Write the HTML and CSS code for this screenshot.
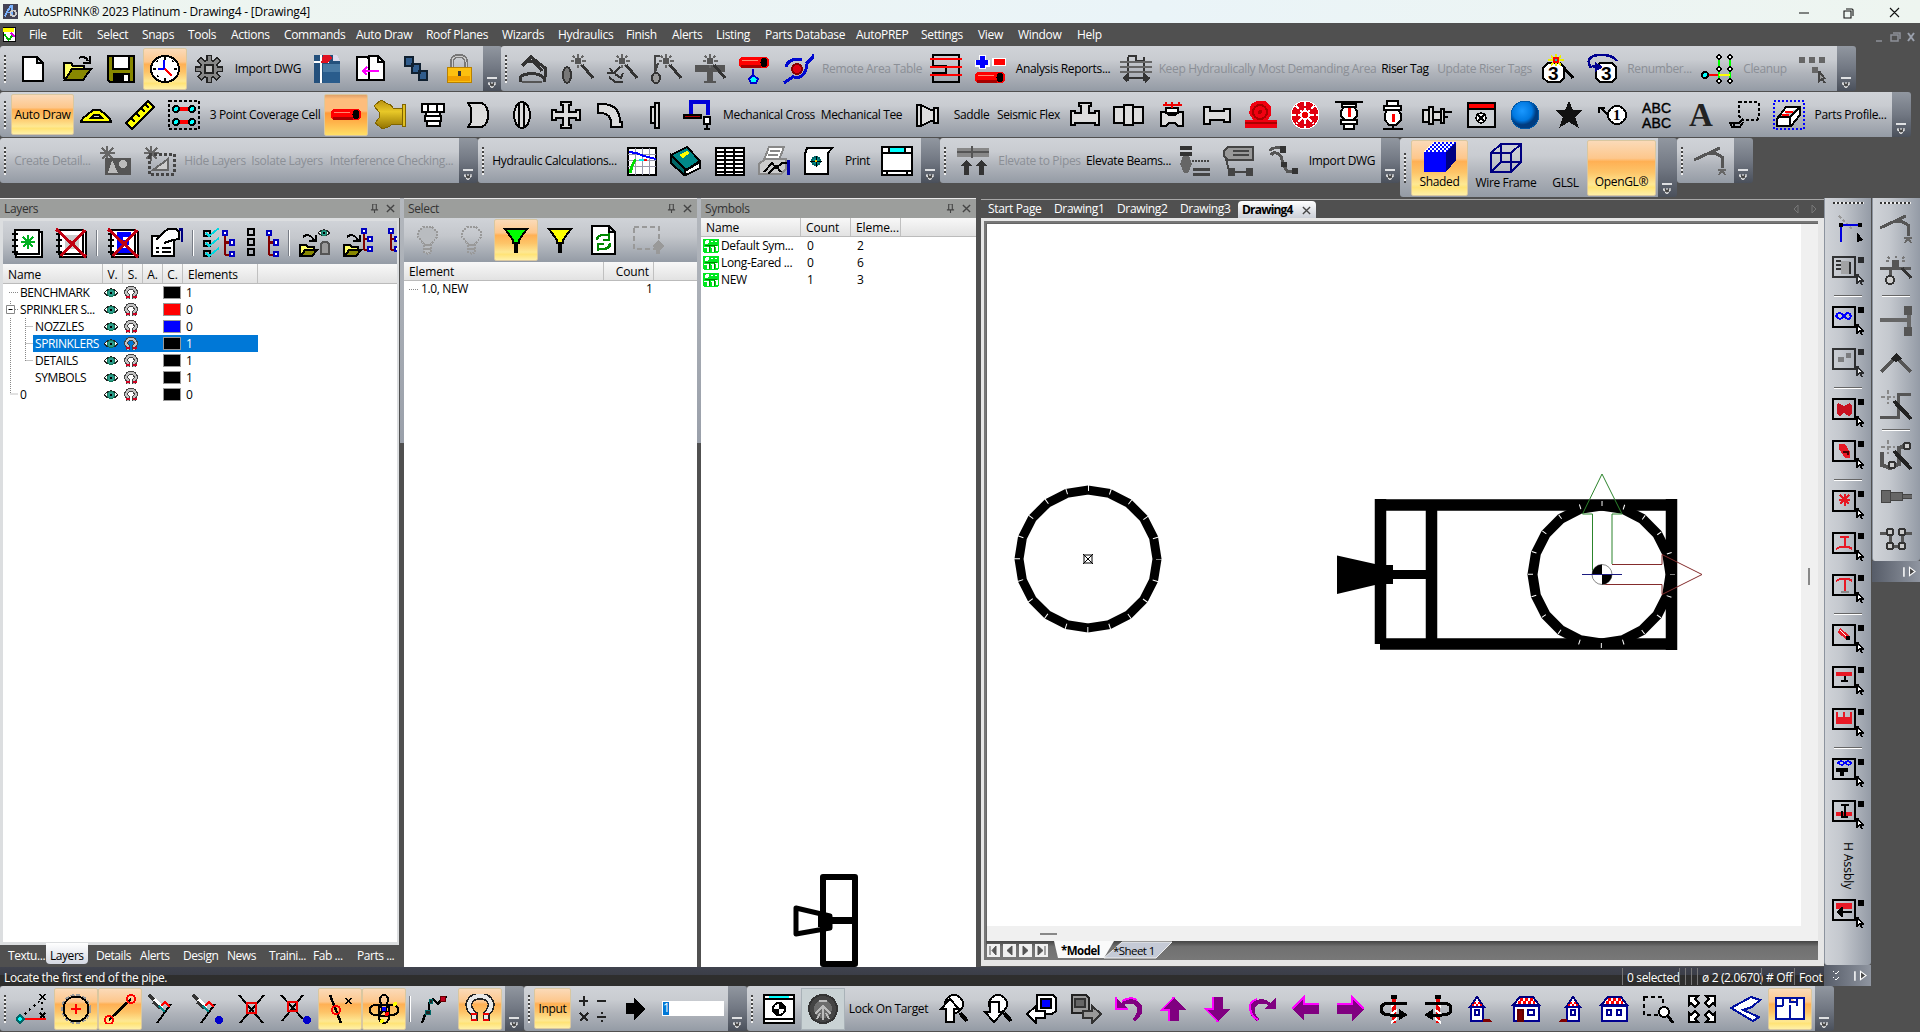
FILE: index.html
```html
<!DOCTYPE html>
<html lang="en">
<head>
<meta charset="utf-8">
<title>AutoSPRINK® 2023 Platinum - Drawing4 - [Drawing4]</title>
<link rel="stylesheet" href="styles.css">
</head>
<body>
<svg class="defs" width="0" height="0">
<defs>
<pattern id="chk" width="4" height="4" patternUnits="userSpaceOnUse"><path d="M0 0h2v2H0zM2 2h2v2H2z" fill="#fff" stroke="none"/></pattern>
<linearGradient id="gold" x2="0" y2="1"><stop offset="0" stop-color="#b89010"/><stop offset=".4" stop-color="#e8c828"/><stop offset="1" stop-color="#907000"/></linearGradient>
<radialGradient id="ball" cx=".4" cy=".35"><stop offset="0" stop-color="#1a98ff"/><stop offset=".7" stop-color="#0078e0"/><stop offset="1" stop-color="#003c80"/></radialGradient>
</defs>
<symbol id="new" viewBox="0 0 32 30"><path d="M6 3h14l6 6v18H6zM20 3v6h6"/></symbol>
<symbol id="open" viewBox="0 0 32 30"><path d="M3 25V9h7l2 3h11v4" fill="#ff6"/><path d="M4 26l7-11h19l-8 11z" fill="#880"/><path d="M18 4q6-3 9 3M29 2v7h-7" fill="none"/></symbol>
<symbol id="save" viewBox="0 0 32 30"><path d="M3 2h26v26H5l-2-2z" fill="#880"/><path d="M8 2h16v13H8z"/><path d="M9 20h15v8H9z" fill="#000"/><path d="M20 22h2v4h-2z" stroke="#fff"/></symbol>
<symbol id="clock" viewBox="0 0 32 30"><ellipse cx="16" cy="15" rx="14" ry="13"/><path d="M16 3v3M16 24v3M4 15h3M25 15h3M8 7l1 1M24 7l-1 1M8 23l1-1"/><path d="M15 6v9H9" stroke="#00f" fill="none"/><path d="M16 15l7 7" stroke="red"/></symbol>
<symbol id="gear" viewBox="0 0 32 30"><path d="M16 1v28M2 15h28M6 5l20 20M26 5L6 25" stroke="#222" stroke-width="6"/><circle cx="16" cy="15" r="9" fill="#888" stroke="#222"/><path d="M16 2v6M16 22v6M3 15h6M23 15h6M7 6l4 4M25 6l-4 4M7 24l4-4M25 24l-4-4" stroke="#888" stroke-width="3"/><path d="M12 11h8v8h-8z" fill="#bbb" stroke="#222"/></symbol>
<symbol id="bmp" viewBox="0 0 32 30"><g stroke="none"><path d="M3 1h22l4 6v22H3z" fill="#24507c"/><path d="M12 10h17v19H12z" fill="#4a7aa4"/><path d="M12 18h17v11H12z" fill="#2a5c8c"/><path d="M22 1h4l3 6h-7z" fill="#dde"/><path d="M3 7h15v2H3zM9 1h2v28H9z" fill="#fff"/><path d="M12 1h7l2 3-5 5h-6z" fill="#e01020"/></g></symbol>
<symbol id="pages" viewBox="0 0 32 30"><path d="M2 3h10l5 5v18H2z"/><path d="M14 2h9l6 6v18H14z"/><path d="M23 2v6h6" fill="none"/><path d="M24 17H8m4-4l-4 4 4 4" stroke="#f0f" fill="none"/></symbol>
<symbol id="cubes" viewBox="0 0 32 30"><g fill="#305c8c" stroke="#102030" stroke-width="1.500"><path d="M6 3h8v9H6zM13 10h8v9h-8zM20 17h8v9h-8z"/></g></symbol>
<symbol id="lock" viewBox="0 0 32 30"><path d="M9 14V8q0-6 7-6t7 6v6" fill="none" stroke="#777" stroke-width="4"/><path d="M9 14V8q0-6 7-6t7 6v6" fill="none" stroke="#ccc" stroke-width="1"/><path d="M4 13h24v15H4z" fill="#fcc010" stroke="#b88000" stroke-width="1"/><path d="M5 22h22v5H5z" fill="#f0a000" stroke="none"/><path d="M15 17h3v5h-3z" fill="#333" stroke="none"/></symbol>
<symbol id="crane" viewBox="0 0 32 30"><path d="M4 12l9-9 14 11v9M9 7l7 1 8 9" fill="none" stroke="#333" stroke-width="3"/><path d="M2 28v-5q5-4 12-3 7-1 12 4v4" fill="none" stroke="#333" stroke-width="3"/><path d="M4 28h20" stroke="#555" stroke-width="2"/></symbol>
<symbol id="spark" viewBox="0 0 32 30"><path d="M16 0v4M16 11v3M9 7h3M20 7h4M11 2l2 2M21 2l-2 2M21 13l-2-2" stroke="#666"/><path d="M13 4h6v6h-6z" fill="#555" stroke="none"/><path d="M20 11l11 13" stroke="#333" stroke-width="3"/></symbol>
<symbol id="wand1" viewBox="0 0 32 30"><use href="#spark"/><ellipse cx="5" cy="21" rx="4" ry="8" fill="#777" stroke="#333"/></symbol>
<symbol id="wand2" viewBox="0 0 32 30"><use href="#spark"/><path d="M4 14l3 5M1 19h7l6-6M3 23l6 5h8M9 20l6 4 2-5" fill="none" stroke="#333"/></symbol>
<symbol id="wand3" viewBox="0 0 32 30"><use href="#spark"/><path d="M4 2h6M5 3v16l3-10" fill="none" stroke="#444"/><ellipse cx="6" cy="24" rx="4" ry="5" fill="#999" stroke="#333"/></symbol>
<symbol id="wand4" viewBox="0 0 32 30"><path d="M1 11h30v7H19v9h3v2H10v-2h3v-9H1z" fill="#555" stroke="none"/><use href="#spark"/></symbol>
<symbol id="pipered" viewBox="0 0 32 30"><path d="M3 3h25l3 3v5l-3 3H3l-2-3V6z" fill="red" stroke="none"/><path d="M3 11h20v3H3z" fill="#a80000" stroke="none"/><path d="M4 6h16" stroke="#ff8a70" stroke-width="1"/><ellipse cx="26" cy="8.500" rx="3.500" ry="4.500" fill="#000" stroke="none"/></symbol>
<symbol id="drip" viewBox="0 0 32 30"><use href="#pipered"/><path d="M15 15v6l-4 4 2 4h5l2-4-5-4" fill="#0ff" stroke="#00c"/></symbol>
<symbol id="orbit" viewBox="0 0 32 30"><path d="M31 0v3l-7 7M24 10v5q-2 9-12 9M4 13Q7 3 20 6M12 22L2 29" fill="none" stroke="#0008d0" stroke-width="3"/><circle cx="15" cy="15" r="5" fill="#e00010" stroke="#800"/></symbol>
<symbol id="rat" viewBox="0 0 32 30"><path d="M3 1h26v27H3v-9h13v-7H3z" fill="none"/><path d="M0 5h32M0 13h32M0 21h32" stroke="red"/></symbol>
<symbol id="pm" viewBox="0 0 32 30"><path d="M1 9h15M8 1v14" stroke="#fff" stroke-width="7"/><path d="M2 8h12M8 2v12" stroke="#00f" stroke-width="5"/><path d="M18 4h14v8H18z" stroke="none"/><path d="M20 5h11v6H20z" fill="red" stroke="none"/><use href="#pipered" y="15"/></symbol>
<symbol id="grid" viewBox="0 0 32 30"><path d="M8 3v24M24 3v24M3 24h27M8 2h8v5h8" fill="none" stroke="#333" stroke-width="2.500"/><path d="M0 8h32M0 13h32M0 18h32" stroke="#666"/><path d="M7 20l-5 4 5 5zM25 20l5 4-5 5z" fill="#333" stroke="none"/></symbol>
<symbol id="nodes" viewBox="0 0 32 30"><path d="M18 3v25M29 3v25" stroke="#0f0"/><path d="M18 21h11" stroke="#ff0"/><path d="M4 21h13" stroke="red"/><circle cx="4" cy="21" r="3" fill="#0ff"/><g stroke-width="1.500"><circle cx="18" cy="3" r="2"/><circle cx="29" cy="3" r="2"/><circle cx="18" cy="15" r="2"/><circle cx="29" cy="15" r="2"/><circle cx="18" cy="27" r="2"/><circle cx="29" cy="27" r="2"/></g></symbol>
<symbol id="boxes" viewBox="0 0 32 30"><path d="M2 3h6v6H2zM12 3h6v6h-6zM22 3h6v6h-6zM15 13h6v6h-6z" fill="#666" stroke="none"/><path d="M22 17v10l3-2 3 4M22 17l6 8" fill="#999" stroke="#444"/></symbol>
<symbol id="prot" viewBox="0 0 32 30"><path d="M1 22q1-4 6-7l6-5h7l6 5q4 3 5 7z" fill="#ff0"/><path d="M11 18l3-3h5l3 3z" fill="#c8cbd0"/></symbol>
<symbol id="ruler" viewBox="0 0 32 30"><path d="M2 23L24 1l6 6L8 29z" fill="#ff0"/><path d="M8 19l3 3M13 14l3 3M18 9l3 3M22 5l3 3"/></symbol>
<symbol id="cell" viewBox="0 0 32 30"><path d="M1 1h30v28H1z" fill="none" stroke-dasharray="3 2"/><path d="M8 9h16M8 22h16" stroke="red" stroke-width="4"/><g fill="#0ff"><circle cx="8" cy="9" r="3"/><circle cx="24" cy="9" r="3"/><circle cx="8" cy="22" r="3"/><circle cx="24" cy="22" r="3"/></g></symbol>
<symbol id="goldt" viewBox="0 0 32 30"><path d="M0 6l7-6 7 4h2l3 4h12v16H18l-2 2-7 3-8-6 4-5v-6z" fill="url(#gold)" stroke="#806400" stroke-width="1"/><path d="M28 4h3v22h-3z" fill="#e0c020" stroke="#806400" stroke-width="1"/></symbol>
<symbol id="screw" viewBox="0 0 32 30"><path d="M4 4h22v8H4zM8 12h14v4H8zM7 16h16v5H7zM9 21h13v5H9zM10 5v6M19 5v6"/></symbol>
<symbol id="cap" viewBox="0 0 32 30"><path d="M6 3h14q6 3 6 12t-6 12H6l3-5V8z" fill="#ddd"/></symbol>
<symbol id="ring" viewBox="0 0 32 30"><ellipse cx="16" cy="15" rx="8" ry="13" fill="#ddd"/><path d="M13 4v22M18 3v24"/></symbol>
<symbol id="cross" viewBox="0 0 32 30"><path d="M11 2h10v3h-2v7h7v-2h4v10h-4v-2h-7v7h2v3H11v-3h2v-7H6v2H2V10h4v2h7V5h-2z" fill="#ddd"/></symbol>
<symbol id="elbow" viewBox="0 0 32 30"><path d="M4 4h4q18 0 18 18h2v5H17v-4q0-9-9-10H4z" fill="#ddd"/></symbol>
<symbol id="flange" viewBox="0 0 32 30"><path d="M17 3h4v25h-4zM13 7h4v16h-4z" fill="#ddd"/></symbol>
<symbol id="hose" viewBox="0 0 32 30"><path d="M9 14V2h17v13" fill="none" stroke="#0000d8" stroke-width="4"/><path d="M2 15h17v3H2z" fill="#a00"/><path d="M22 17h6v7h-6zM25 24v5m-3 0h6"/></symbol>
<symbol id="reduc" viewBox="0 0 32 30"><path d="M6 5h4l10 5h3v11h-3l-10 5H6zM23 8h4v15h-4zM10 5v21" fill="#ddd"/></symbol>
<symbol id="tee" viewBox="0 0 32 30"><path d="M10 3h12v3h-2v7h6v-2h4v14h-4v-2H6v2H2V11h4v2h6V6h-2z" fill="#ddd"/></symbol>
<symbol id="coupl" viewBox="0 0 32 30"><path d="M1 7h10v16H1zM11 5h9v20h-9zM20 7h10v16H20z" fill="#ddd"/></symbol>
<symbol id="valve" viewBox="0 0 32 30"><path d="M4 12h5l3 3h6l3-3h5v14h-5l-3-3h-6l-3 3H4z" fill="#ddd"/><path d="M9 8h12v5H9z" stroke-width="1.500"/><path d="M6 5h19M9 2v3M15 2v6M22 2v3" stroke="#e00"/></symbol>
<symbol id="nip" viewBox="0 0 32 30"><path d="M3 7h6v4h14v-2h6v13h-6v-2H9v4H3z" fill="#ddd"/></symbol>
<symbol id="pump" viewBox="0 0 32 30"><path d="M6 4l6-3h8l6 6v8l-3 5h9v8H0v-8h8L4 13z" fill="#f00010" stroke="none"/><circle cx="15" cy="12" r="7" fill="none" stroke="#a00"/><path d="M0 23h32" stroke="#a00"/><circle cx="15" cy="12" r="2" fill="#a00" stroke="none"/></symbol>
<symbol id="wheel" viewBox="0 0 32 30"><circle cx="16" cy="15" r="14" fill="#e00010" stroke="#fff" stroke-width="1"/><path d="M16 2v26M3 15h26M7 6l18 18M25 6L7 24" stroke="#fff" stroke-dasharray="4 2"/><circle cx="16" cy="15" r="4" fill="#e00" stroke="#fff"/></symbol>
<symbol id="head1" viewBox="0 0 32 30"><path d="M2 2h28" /><path d="M11 7l-3 4v5l4 4h8l4-4v-5l-3-4z"/><path d="M9 4h14v3H9zM8 20h16v4H8zM11 24h10v5H11z"/><path d="M16 8v9" stroke="red" stroke-width="3"/></symbol>
<symbol id="head2" viewBox="0 0 32 30"><path d="M10 1h11v5H10zM7 6h17v4H7zM10 10l-2 4v6l4 5h7l5-5v-6l-3-4zM6 29h20M16 25v4"/><path d="M16 14v8" stroke="red" stroke-width="3"/></symbol>
<symbol id="head3" viewBox="0 0 32 30"><path d="M2 10h6v12H2zM8 7h4v17H8zM12 12h8v8h-8zM20 9h3v14h-3zM23 12h8M23 17h4" fill="#ddd"/></symbol>
<symbol id="cab" viewBox="0 0 32 30"><path d="M3 3h27v24H3z" fill="#ccd0d4"/><path d="M4 4h25v4H4z" fill="red" stroke="none"/><path d="M4 9h25"/><circle cx="16" cy="18" r="5" stroke-width="1.500"/><path d="M12 14l8 8M20 14l-8 8" stroke-width="1.500"/></symbol>
<symbol id="sphere" viewBox="0 0 32 30"><circle cx="16" cy="15" r="14" fill="url(#ball)" stroke="#0058a8" stroke-width="1"/></symbol>
<symbol id="star" viewBox="0 0 32 30"><path d="M16 1l4 9h10l-8 7 4 11-10-6-10 6 4-11-8-7h10z" fill="#111" stroke="none"/></symbol>
<symbol id="cloud" viewBox="0 0 32 30"><path d="M10 2h18l2 2v13l-2 3H13l-3-4z" fill="none" stroke-dasharray="3 2"/><path d="M14 19l-4 4H1l2 4h8l3-5M5 23v5" fill="none"/></symbol>
<symbol id="part" viewBox="0 0 32 30"><path d="M1 1h30v28H1z" fill="none" stroke="#00f" stroke-dasharray="2 2"/><path d="M4 19l9-12h14v8l-9 11H4zM4 17h13l9-9M17 17v8"/><path d="M12 12h8M9 15h7" stroke="red"/></symbol>
<symbol id="det1" viewBox="0 0 32 30"><path d="M7 0v15M0 7h15M2 2l11 11M13 2L2 13" stroke="#666"/><path d="M5 12h26v17H5z" fill="#555" stroke="none"/><path d="M8 27l4-13 6 13z" fill="#bbb" stroke="none"/><circle cx="23" cy="18" r="4" fill="#bbb" stroke="none"/></symbol>
<symbol id="det2" viewBox="0 0 32 30"><path d="M7 0v15M0 7h15M2 2l11 11M13 2L2 13" stroke="#666"/><path d="M5 8h25v20H5z" fill="none" stroke="#444" stroke-width="3" stroke-dasharray="3 2"/><path d="M9 24l15-11v11z" fill="#ccc" stroke="#666"/></symbol>
<symbol id="chart" viewBox="0 0 32 30"><path d="M2 2h28v27H2z"/><path d="M2 8h28M2 14h28M2 20h28M9 2v27M16 2v27M23 2v27" stroke="#99a" stroke-width="1"/><path d="M3 6l7 1 8 3 12 3" stroke="#00f" fill="none"/><path d="M4 27q3-12 6-13" stroke="#0d0" stroke-width="3" fill="none"/><path d="M13 14h5" stroke="#0ee"/><path d="M18 14h3" stroke="red"/></symbol>
<symbol id="book" viewBox="0 0 32 30"><path d="M1 9L17 1l13 14-14 9z" fill="#088"/><path d="M1 9v8l13 12 2-5z" fill="#066"/><path d="M15 25l15-9v6l-14 7z"/><path d="M9 9l8-4 3 2-7 5z" fill="#ff0" stroke="none"/></symbol>
<symbol id="table" viewBox="0 0 32 30"><path d="M2 2h28v27H2z"/><path d="M2 6h28M2 10h28M2 14h28M2 18h28M2 22h28M2 26h28M11 2v27M20 2v27" stroke-width="1.600"/></symbol>
<symbol id="print" viewBox="0 0 32 30"><path d="M11 1h15l-5 13H6z" stroke="#888"/><path d="M12 5h10M10 9h10" stroke="#888"/><path d="M1 18l6-5h21v10l-5 5H1z" fill="#ccc" stroke="#888"/><path d="M6 26l8-9 4 5 6-5h5M10 28l8-8 5 6" fill="none"/><path d="M30 14v15" stroke="#00a" stroke-width="3"/></symbol>
<symbol id="scroll" viewBox="0 0 32 30"><path d="M5 2h25l-4 5v21H3V8z"/><circle cx="14" cy="15" r="4" fill="#088" stroke="#066"/><path d="M8 15h12M14 10v11" stroke-width="1"/><path d="M13 14h2v2h-2z" fill="#fc0" stroke="none"/></symbol>
<symbol id="sheet" viewBox="0 0 32 30"><path d="M1 1h30v28H1zM1 7h30M1 25h30M6 25v4M26 25v4M8 1v6M24 1v6"/><path d="M9 2h14v4H9z" fill="#0ff" stroke="none"/></symbol>
<symbol id="elev" viewBox="0 0 32 30"><path d="M0 2h32v9H0z" fill="#888" stroke="none"/><path d="M0 6h32M15 0v12" stroke="#555"/><path d="M9 14l-6 6h4v9h5v-9h4zM24 14l-6 6h4v9h5v-9h4z" fill="#333" stroke="none"/></symbol>
<symbol id="hang1" viewBox="0 0 32 30"><path d="M1 0h12v4H1zM1 6h12v4H1z" fill="#333" stroke="none"/><path d="M4 10h6l3 8-4 9H5L1 18z" fill="#666" stroke="none"/><path d="M13 15h18" stroke="#444" stroke-dasharray="2 1"/><path d="M14 23h17M14 28h17" stroke="#444" stroke-width="3"/></symbol>
<symbol id="hang2" viewBox="0 0 32 30"><path d="M5 1h25v13H5l-4-4V5z" fill="#999" stroke="#444"/><path d="M10 5h16M10 9h16M3 13l3 12" stroke="#444"/><path d="M7 26h20M6 23h5v6H6zM24 23h5v6h-5z" fill="#444" stroke="#444"/></symbol>
<symbol id="hang3" viewBox="0 0 32 30"><path d="M3 5q1-4 10-3M4 9q3-5 10 1l2 8 4 7h8" fill="none" stroke="#555" stroke-width="3"/><path d="M13 0h6v7h-6zM25 22h6v6h-6zM14 16h6v5h-6z" fill="#333" stroke="none"/></symbol>
<symbol id="shaded" viewBox="0 0 32 30"><path d="M0 10L9 0h23L22 10z" fill="#0008ff" stroke="none"/><path d="M0 10L9 0h23L22 10z" fill="url(#chk)" stroke="none"/><path d="M0 10h22v20H0z" fill="#00f" stroke="none"/><path d="M22 10L32 0v18L22 30z" fill="#000080" stroke="none"/></symbol>
<symbol id="wire" viewBox="0 0 32 30"><path d="M1 10h20v19H1zM11 1h20v18H11zM1 10l10-9M21 10L31 1M1 29l10-10M21 29l10-10" fill="none" stroke="#000080"/></symbol>
<symbol id="arm" viewBox="0 0 32 30"><path d="M0 14L26 2M13 7h8l7 4v11" fill="none" stroke="#555" stroke-width="3"/><path d="M24 24h8M25 29l3-5 3 5" fill="none" stroke="#666"/></symbol>
<symbol id="ovf" viewBox="0 0 11 12"><path d="M0 1h10" stroke="#fff" stroke-width="1.600"/><path d="M1 6h8l-4 5z" fill="#444" stroke="#fff" stroke-width="1.200" stroke-dasharray="2 1"/></symbol>
<symbol id="ovfv" viewBox="0 0 14 12"><path d="M1 1v10" stroke="#fff" stroke-width="1.600"/><path d="M7 1v9l6-4.500z" fill="#444" stroke="#fff" stroke-width="1.200"/></symbol>
<symbol id="nb" viewBox="0 0 32 30"><path d="M5 4h26v25H5z"/><path d="M4 2h24v24H4z"/><path d="M1 6h6M1 12h6M1 18h6M1 24h6"/></symbol>
<symbol id="nbnew" viewBox="0 0 32 30"><use href="#nb"/><path d="M17 7v14M10 14h14M12 9l10 10M22 9L12 19" stroke="#00b020"/></symbol>
<symbol id="redx" viewBox="0 0 32 30"><path d="M1 1l30 28M30 2L6 28" stroke="#c00010" stroke-width="3"/></symbol>
<symbol id="nbdel" viewBox="0 0 32 30"><use href="#nb"/><path d="M10 7h14v14H10z" fill="#ccc" stroke="none"/><use href="#redx"/></symbol>
<symbol id="nbdele" viewBox="0 0 32 30"><use href="#nb"/><path d="M10 4h14v5h-8v3h6v5h-6v3h8v5H10z" fill="#00f" stroke="none"/><use href="#redx"/></symbol>
<symbol id="prop" viewBox="0 0 32 30"><path d="M1 8h22v20H1zM5 20h3M5 24h3M11 20h9M11 24h9"/><path d="M5 12l8-8 4-3h8l3 3v7l-6 1-9 3"/><path d="M28 1h3v13" stroke="#000080" stroke-width="3" fill="none"/></symbol>
<symbol id="tree" viewBox="0 0 12 26"><path d="M3 4v20M3 12h6M3 24h6" fill="none" stroke="#800000"/><path d="M1 1h4v4H1zM8 10h4v4H8zM8 21h4v4H8z" stroke="#0000c0"/></symbol>
<symbol id="chktree" viewBox="0 0 32 30"><path d="M1 3h6v5H1zM1 13h6v5H1zM1 23h6v5H1z" fill="none"/><path d="M3 5l3 3L16 0M3 15l3 3 10-8M3 25l3 3 10-8" fill="none" stroke="#00d8e0"/><use href="#tree" x="18" y="2" width="14" height="27"/></symbol>
<symbol id="boxtree" viewBox="0 0 32 30"><path d="M1 1h6v6H1zM1 11h6v6H1zM1 21h6v6H1z" fill="none"/><use href="#tree" x="18" y="2" width="14" height="27"/></symbol>
<symbol id="eye" viewBox="0 0 16 12"><path d="M1 6q7-8 14 0-7 7-14 0z" stroke="#222" stroke-width="1.200"/><circle cx="8" cy="6" r="3.500" fill="#2a9a8a" stroke="#175" stroke-width="1"/><path d="M7 5h2v2H7z" fill="#000" stroke="none"/></symbol>
<symbol id="folder" viewBox="0 0 32 30"><path d="M1 28V17h6l2 2h6v3" fill="#ff6"/><path d="M2 28l4-6h12l-5 6z" fill="#880"/><path d="M4 9q6-5 11 3M17 7v6h-7" fill="none"/></symbol>
<symbol id="foldeye" viewBox="0 0 32 30"><use href="#folder"/><use href="#eye" x="18" y="0" width="14" height="10"/><path d="M22 26V16q4-5 8 0v10z" fill="#999" stroke="#555"/></symbol>
<symbol id="foldtree" viewBox="0 0 32 30"><use href="#folder"/><use href="#tree" x="17" y="0" width="13" height="24"/></symbol>
<symbol id="treeonly" viewBox="0 0 32 30"><use href="#tree" x="0" y="0" width="13" height="24"/></symbol>
<symbol id="mag" viewBox="0 0 14 14"><path d="M4 13V9Q2 8 2 6q1-4 5-4t5 4q0 2-2 3v4" fill="none" stroke="#444" stroke-width="4"/><path d="M4 13V9Q2 8 2 6q1-4 5-4t5 4q0 2-2 3v4" fill="none" stroke="#c4c4c4" stroke-width="2"/><path d="M2 11h4M9 11h4" stroke="#d00020"/></symbol>
<symbol id="bulb" viewBox="0 0 32 30"><path d="M11 2h9l5 5v5l-6 7v8l-3 2-4-2v-8L6 12V7z" fill="#b9bcc0" stroke="#999" stroke-dasharray="2 1"/><path d="M12 20h7M12 24h7" stroke="#999"/></symbol>
<symbol id="bulb2" viewBox="0 0 32 30"><path d="M11 2h9l5 5v5l-6 7v8l-3 2-4-2v-8L6 12V7z" fill="none" stroke="#999" stroke-dasharray="2 1"/><path d="M12 20h7M12 24h7" stroke="#999"/></symbol>
<symbol id="fung" viewBox="0 0 32 30"><path d="M5 4h22L19 15v3h-6v-3z" fill="#0f0"/><path d="M16 17v11" stroke-width="4"/></symbol>
<symbol id="funy" viewBox="0 0 32 30"><path d="M5 4h22L19 15v3h-6v-3z" fill="#ff0"/><path d="M16 17v11" stroke-width="4"/></symbol>
<symbol id="refresh" viewBox="0 0 32 30"><path d="M4 1h17l6 6v22H4zM21 1v6h6"/><path d="M9 15q0-5 7-5h4M21 8v7h-6M22 18q0 6-7 6h-4M10 26v-7h6" fill="none" stroke="#080" stroke-width="2.500"/></symbol>
<symbol id="selbox" viewBox="0 0 32 30"><path d="M2 2h25v22H2z" fill="none" stroke="#999" stroke-dasharray="5 3"/><path d="M27 15l5 6-4 4v4h-4v-4l-4-4z" fill="#999" stroke="none"/></symbol>
<symbol id="fr" viewBox="0 0 32 30"><path d="M1 1h22v20H1z" fill="none"/><path d="M26 1h6v6h-6z" fill="#000" stroke="none"/><path d="M25 18v9l3-2 2 4M25 18l6 7h-3" stroke-width="1.800"/></symbol>
<symbol id="s1" viewBox="0 0 32 30"><path d="M7 2l14 14" stroke="#999" stroke-dasharray="3 2"/><path d="M9 11v17M9 11h18" stroke="#0000e0"/><path d="M7 9h4v4H7zM26 9h4v4h-4zM25 18v10l6-2z" fill="#000" stroke="none"/></symbol>
<symbol id="v2" viewBox="0 0 32 30"><path d="M0 12h31M10 14v6" stroke="#555" stroke-width="3"/><circle cx="10" cy="24" r="4" fill="#ccc" stroke="#333"/><path d="M12 4h7v9h-7z" fill="#555" stroke="none"/><path d="M16 0v2M6 5h3M22 5h3M8 1l2 2M24 1l-2 2" stroke="#777"/><path d="M22 12l9 10" stroke="#333" stroke-width="3"/></symbol>
<symbol id="v3" viewBox="0 0 32 30"><path d="M0 14h28M29 8v14" stroke="#666" stroke-width="4"/><path d="M24 0h8v9h-8zM24 21h8v9h-8z" fill="#555" stroke="none"/></symbol>
<symbol id="v4" viewBox="0 0 32 30"><path d="M1 24L16 9l15 15" fill="none" stroke="#555" stroke-width="4"/><path d="M11 11l5-6 6 6-6 3z" fill="#222" stroke="none"/></symbol>
<symbol id="v5" viewBox="0 0 32 30"><path d="M0 27h18V4h13" fill="none" stroke="#555" stroke-width="3"/><path d="M8 0v14M1 7h14" stroke="#888" stroke-dasharray="4 2"/><path d="M14 11l17 18" stroke="#222" stroke-width="4"/></symbol>
<symbol id="v6" viewBox="0 0 32 30"><path d="M2 12v13l8 3 9-4V8l7-3" fill="none" stroke="#555" stroke-width="4"/><circle cx="27" cy="6" r="3.500" fill="#ccc" stroke="#333"/><circle cx="12" cy="25" r="3.500" fill="#ccc" stroke="#333"/><path d="M8 0v14M1 7h14" stroke="#888" stroke-dasharray="4 2"/><path d="M14 11l17 18" stroke="#222" stroke-width="4"/></symbol>
<symbol id="v7" viewBox="0 0 32 30"><path d="M1 8h9v12H1zM10 10h12v8H10zM22 12h10v4H22z" fill="#666" stroke="#444" stroke-width="1"/></symbol>
<symbol id="v8" viewBox="0 0 32 30"><path d="M0 9h10v13M32 9H22v13M7 22h18" fill="none" stroke="#555" stroke-width="3"/><g fill="#ccc" stroke="#333"><circle cx="10" cy="8" r="3.500"/><circle cx="22" cy="8" r="3.500"/><circle cx="10" cy="22" r="3.500"/><circle cx="22" cy="22" r="3.500"/></g></symbol>
<symbol id="b1" viewBox="0 0 32 30"><path d="M4 24L26 5M26 8v12" stroke-dasharray="2 4"/><path d="M24 0l5 6M29 0l-5 6M24 19l5 5M29 19l-5 5" stroke-width="1.500"/><path d="M4 25h26" stroke="red"/><path d="M0 25l4-4 4 4-4 4z" fill="#0ff" stroke="#066"/></symbol>
<symbol id="b2" viewBox="0 0 32 30"><circle cx="16" cy="15" r="14" fill="none" stroke="#999" stroke-dasharray="4 2"/><circle cx="16" cy="15" r="12.500" fill="none"/><path d="M11 15h10M16 10v10" stroke="red"/></symbol>
<symbol id="b3" viewBox="0 0 32 30"><path d="M5 26L27 5" stroke-width="2.500"/><circle cx="27" cy="5" r="4" fill="none" stroke="red"/><circle cx="5" cy="26" r="4" fill="none" stroke="red"/></symbol>
<symbol id="b4" viewBox="0 0 32 30"><path d="M9 29L23 10"/><path d="M6 5l8 9" stroke="#fff" stroke-width="4"/><path d="M1 1l5 5M5 8l7 6" stroke="#333" stroke-width="3"/><path d="M13 12l4-4 5 5" fill="none" stroke="red"/><path d="M11 12l6 6" stroke="#088"/></symbol>
<symbol id="b5" viewBox="0 0 32 30"><use href="#b4"/><circle cx="27" cy="26" r="4" fill="#00c" stroke="none"/></symbol>
<symbol id="b6" viewBox="0 0 32 30"><path d="M3 1l24 28M28 1L4 29"/><path d="M11 9h9v10h-9z" fill="none" stroke="#e00"/></symbol>
<symbol id="b7" viewBox="0 0 32 30"><path d="M1 1l22 24M23 1L2 27"/><path d="M8 8h9v9H8z" fill="none" stroke="#e00"/><circle cx="27" cy="26" r="4" fill="#00c" stroke="none"/></symbol>
<symbol id="b8" viewBox="0 0 32 30"><path d="M6 1l11 28" stroke-width="2.500"/><circle cx="12" cy="16" r="4" fill="none" stroke="red"/><path d="M22 4l5 6M27 4l-5 6" stroke-width="1.500"/></symbol>
<symbol id="b9" viewBox="0 0 32 30"><g fill="none"><ellipse cx="16" cy="6" rx="4" ry="5"/><ellipse cx="8" cy="16" rx="6.500" ry="5"/><ellipse cx="24" cy="16" rx="6.500" ry="5"/><ellipse cx="16" cy="23" rx="5" ry="6"/><path d="M11 11h10v11H11z"/></g><path d="M14 13h4v4h-4z" fill="#00f" stroke="none"/><circle cx="27" cy="10" r="2" fill="#ff0" stroke="none"/><circle cx="14" cy="27" r="2" fill="#ff0" stroke="none"/><circle cx="19" cy="20" r="2" fill="red" stroke="none"/></symbol>
<symbol id="b10" viewBox="0 0 32 30"><path d="M2 29l3-8 4-3V9l4-4 5 5 5-7h4" fill="none" stroke-width="2.500"/><path d="M20 2h5v5h-5z" fill="#c00020" stroke="#600" stroke-width="1"/><path d="M5 16h5v4H5zM9 5h3v4H9z" fill="#222" stroke="#066" stroke-width="1"/></symbol>
<symbol id="b11" viewBox="0 0 32 30"><path d="M10 27v-7Q4 15 5 9q3-7 11-7t11 7q1 6-5 11v7" fill="none" stroke="#222" stroke-width="7"/><path d="M10 26v-6Q4 15 5 9q3-7 11-7t11 7q1 6-5 11v6" fill="none" stroke="#e8e8e8" stroke-width="4"/><path d="M7 20h6M19 20h6M7 26h6M19 26h6" stroke="#e00"/></symbol>
<symbol id="math" viewBox="0 0 32 30"><path d="M2 7h9M6.500 2v10M20 7h9M3 19l8 8M11 19l-8 8M20 23h9M25 18v2M25 26v2" stroke="#222"/></symbol>
<symbol id="goarr" viewBox="0 0 32 30"><path d="M5 9h8V4l12 11-12 11v-6H5z" fill="#000" stroke="none"/></symbol>
<symbol id="tgt" viewBox="0 0 32 30"><path d="M1 1h30v28H1zM1 5h30M1 25h30"/><path d="M6 2h20v2H6z" fill="#0ff" stroke="none"/><circle cx="16" cy="15" r="6"/><path d="M16 9a6 6 0 0 1 6 6h-6zM16 21a6 6 0 0 1-6-6h6z" fill="#000" stroke="none"/></symbol>
<symbol id="lockt" viewBox="0 0 32 30"><circle cx="16" cy="15" r="14" fill="#444" stroke="#333"/><circle cx="16" cy="15" r="10" fill="#6c6c6c" stroke="#444"/><path d="M12 7h8M8 20l8-8 8 8M16 12v14M10 25l3-6M22 25l-3-6" stroke="#bbb" stroke-width="1.500" fill="none"/></symbol>
<symbol id="zin" viewBox="0 0 32 30"><circle cx="16" cy="10" r="9"/><path d="M22 19l7 8" stroke-width="4"/><path d="M12 5l9 10h-5v13H8V15H3z"/></symbol>
<symbol id="zout" viewBox="0 0 32 30"><circle cx="16" cy="10" r="9"/><path d="M22 19l7 8" stroke-width="4"/><path d="M12 28l9-10h-4V8H8v10H3z"/></symbol>
<symbol id="prev" viewBox="0 0 32 30"><path d="M11 1h16l3 3v13l-4 3H11z"/><path d="M15 5h10v9H15z" fill="#00f"/><path d="M1 20l9-8v5h9v7h-9v5z"/></symbol>
<symbol id="next" viewBox="0 0 32 30"><path d="M2 1h14l3 3v15H2z" fill="#999" stroke="#222"/><path d="M5 5h10v8H5z" fill="#666" stroke="#333"/><path d="M31 20l-9-8v5h-9v7h9v5z" fill="#999" stroke="#333"/></symbol>
<symbol id="undo" viewBox="0 0 32 30"><path d="M2 3v12h12l-4-4q9-4 13 3 1 7-5 11l3 2q9-6 7-15-5-9-16-6l-5 3z" fill="#800080" stroke="none"/><path d="M2 3v12h12M8 7q9-5 15-1" stroke="#f0f" fill="none"/></symbol>
<symbol id="redo" viewBox="0 0 32 30"><g transform="matrix(-1 0 0 1 32 0)"><path d="M2 3v12h12l-4-4q9-4 13 3 1 7-5 11l3 2q9-6 7-15-5-9-16-6l-5 3z" fill="#800080" stroke="none"/><path d="M21 5q8 3 7 9-1 8-8 12" stroke="#f0f" fill="none"/></g></symbol>
<symbol id="up" viewBox="0 0 32 30"><path d="M16 3l12 13h-7v11H11V16H4z" fill="#800080" stroke="none"/><path d="M16 3L4 16h7v11" stroke="#f0f" fill="none" stroke-width="1.600"/></symbol>
<symbol id="down" viewBox="0 0 32 30"><path d="M16 28L4 15h7V3h10v12h7z" fill="#800080" stroke="none"/><path d="M16 28L4 15h7V3" stroke="#f0f" fill="none" stroke-width="1.600"/></symbol>
<symbol id="left" viewBox="0 0 32 30"><path d="M2 15L14 3v7h15v10H14v7z" fill="#800080" stroke="none"/><path d="M2 15L14 3v7h15" stroke="#f0f" fill="none" stroke-width="1.600"/></symbol>
<symbol id="right" viewBox="0 0 32 30"><path d="M30 15L18 3v7H3v10h15v7z" fill="#800080" stroke="none"/><path d="M30 15L18 3v7H3" stroke="#f0f" fill="none" stroke-width="1.600"/></symbol>
<symbol id="rotl" viewBox="0 0 32 30"><path d="M14 1h4v28h-4z" fill="#e00" stroke="none"/><path d="M13 13l6-5M13 29l6-5M13 20l6-4" stroke="#fff"/><path d="M13 3h6" stroke-width="4"/><path d="M29 9H12Q3 9 3 15t9 6h11" fill="none" stroke-width="3"/><path d="M21 15l9 6-9 5z" fill="#000" stroke="none"/></symbol>
<symbol id="rotr" viewBox="0 0 32 30"><g transform="matrix(-1 0 0 1 32 0)"><path d="M14 1h4v28h-4z" fill="#e00" stroke="none"/><path d="M13 13l6-5M13 29l6-5M13 20l6-4" stroke="#fff"/><path d="M13 3h6" stroke-width="4"/><path d="M29 9H12Q3 9 3 15t9 6h11" fill="none" stroke-width="3"/><path d="M21 15l9 6-9 5z" fill="#000" stroke="none"/></g></symbol>
<symbol id="h1" viewBox="0 0 32 30"><path d="M4 13l7-10 7 10z" fill="#fff" stroke="#000080"/><path d="M8 9h6M6 11h10" stroke="red" stroke-dasharray="2 2"/><path d="M5 13h12v14H5z" stroke="#000090"/><path d="M9 16h4v5H9z" stroke="#000090"/><path d="M17 25h6l4 3H17z" fill="#800000" stroke="none"/></symbol>
<symbol id="h2" viewBox="0 0 32 30"><path d="M3 11l7-8h13l6 8z" stroke="#000080"/><path d="M10 5h13M8 8h17" stroke="red" stroke-width="3" stroke-dasharray="3 2"/><path d="M4 12h25v15H4z" stroke="#000090"/><path d="M8 16h5v11H8z" fill="#800000" stroke="#600"/><path d="M18 16h6v5h-6z" stroke="#000090"/></symbol>
<symbol id="h3" viewBox="0 0 32 30"><path d="M12 13l7-10 7 10z" stroke="#000080"/><path d="M16 9h6M14 11h10" stroke="red" stroke-dasharray="2 2"/><path d="M13 13h12v14H13z" stroke="#000090"/><path d="M17 16h4v5h-4z" stroke="#000090"/><path d="M13 25H8l-4 3h9z" fill="#800000" stroke="none"/></symbol>
<symbol id="h4" viewBox="0 0 32 30"><path d="M3 11l7-8h13l6 8z" stroke="#000080"/><path d="M10 5h13M8 8h17" stroke="red" stroke-width="3" stroke-dasharray="3 2"/><path d="M4 12h25v15H4z" stroke="#000090"/><path d="M9 16h4v5H9zM19 16h4v5h-4z" stroke="#000090"/></symbol>
<symbol id="zwin" viewBox="0 0 32 30"><path d="M2 3h19v18H2z" fill="none" stroke-dasharray="4 3"/><circle cx="22" cy="18" r="5"/><path d="M26 22l5 7" stroke-width="3"/></symbol>
<symbol id="zext" viewBox="0 0 32 30"><path d="M3 2h9l-3 3 4 4-4 4-4-4-2 2zM29 2h-9l3 3-4 4 4 4 4-4 2 2zM3 28h9l-3-3 4-4-4-4-4 4-2-2zM29 28h-9l3-3-4-4 4-4 4 4 2-2z"/></symbol>
<symbol id="iso" viewBox="0 0 32 30"><path d="M1 14L21 3l9 3-8 7-9 3 16 7-6 4z" stroke="#0010a0"/></symbol>
<symbol id="plan" viewBox="0 0 32 30"><path d="M2 4h28v21H2zM9 4v8M16 11v14M16 4v4h7M23 4v8M2 12h7" stroke="#0010a0"/></symbol>
<symbol id="pin" viewBox="0 0 10 10"><path d="M3 0v6M3 0h4v6M1 6.500h8M5 7v3" fill="none" stroke="#444" stroke-width="1.200"/></symbol>
<symbol id="x" viewBox="0 0 10 10"><path d="M1 1l8 8M9 1L1 9" stroke="#444" stroke-width="1.500" fill="none"/></symbol>
<symbol id="sym" viewBox="0 0 16 14"><path d="M1 0h14l1 1v12l-1 1H1l-1-1V1z" fill="#00e820" stroke="none"/><circle cx="4" cy="3.500" r="2" stroke="none"/><path d="M8 3h2M12 3h2M1 9h4v4M8 9h2v4M12 8h2v4" stroke="#fff" stroke-width="1.500" fill="none"/><path d="M2 6.500h12M6.500 7v6M11 7v6" stroke="#080" stroke-width="1"/></symbol>
</svg>

<header class="title">
<svg class="ic app" viewBox="0 0 16 16"><path d="M0 0h16v16H0z" fill="#445" stroke="none"/><path d="M2 13L8 2h2v11M5 9h5" fill="none" stroke="#7ab4ff"/><circle cx="11" cy="10" r="3" fill="none" stroke="#ccc" stroke-width="1.500"/></svg>
<span class="cap">AutoSPRINK® 2023 Platinum - Drawing4 - [Drawing4]</span>
<svg class="win" viewBox="0 0 110 14"><path d="M4 8h10M49 6h7v7h-7zM51 4h6q1 0 1 1v6M95 3l9 9M104 3l-9 9" fill="none" stroke="#111" stroke-width="1.100"/></svg>
</header>
<nav class="menu">
<svg class="ic" viewBox="0 0 16 16" width="16" height="15"><path d="M1 1h13v14H1z" stroke-width="1"/><path d="M1 1h11v4H1z" fill="#ff0" stroke="none"/><path d="M2 8l5 6M7 14l4-6" stroke="#0b0"/><path d="M9 6l4 4" stroke="#d0d"/></svg>
<span class="w33">File</span><span class="w35">Edit</span><span class="w45">Select</span><span class="w46">Snaps</span><span class="w43">Tools</span><span class="w53">Actions</span><span class="w72">Commands</span><span class="w70">Auto Draw</span><span class="w76">Roof Planes</span><span class="w56">Wizards</span><span class="w68">Hydraulics</span><span class="w46">Finish</span><span class="w44">Alerts</span><span class="w49">Listing</span><span class="w91">Parts Database</span><span class="w65">AutoPREP</span><span class="w57">Settings</span><span class="w40">View</span><span class="w59">Window</span><span>Help</span>
<svg class="mdi" viewBox="0 0 42 12"><path d="M1 10h6M16 4h7v6h-7zM18 2h7v6" fill="none" stroke="#8d9098" stroke-width="1.500"/><path d="M33 2l6 8M39 2l-6 8" stroke="#9aa0ac" stroke-width="2"/></svg>
</nav>

<section class="bars">
<div class="row">
<div class="tb"><i class="grip"></i>
<svg class="ic"><use href="#new"/></svg><svg class="ic"><use href="#open"/></svg><svg class="ic"><use href="#save"/></svg><svg class="ic on"><use href="#clock"/></svg><svg class="ic"><use href="#gear"/></svg><b class="w74">Import DWG</b><svg class="ic"><use href="#bmp"/></svg><svg class="ic"><use href="#pages"/></svg><svg class="ic"><use href="#cubes"/></svg><svg class="ic"><use href="#lock"/></svg>
</div><i class="ov"><svg><use href="#ovf"/></svg></i>
<div class="tb gapl"><i class="grip"></i>
<svg class="ic"><use href="#crane"/></svg><svg class="ic"><use href="#wand1"/></svg><svg class="ic"><use href="#wand2"/></svg><svg class="ic"><use href="#wand3"/></svg><svg class="ic"><use href="#wand4"/></svg><svg class="ic"><use href="#drip"/></svg><svg class="ic"><use href="#orbit"/></svg><b class="w104 off">Remote Area Table</b><svg class="ic"><use href="#rat"/></svg><svg class="ic"><use href="#pm"/></svg><b class="w102">Analysis Reports...</b><svg class="ic"><use href="#grid"/></svg><b class="w219 off">Keep Hydraulically Most Demanding Area</b><b class="w56">Riser Tag</b><b class="w103 off">Update Riser Tags</b><svg class="ic"><path d="M6 9h12l4 4v11l-4 4H6l-5-4V14z"/><text class="num" x="6" y="26">3</text><path d="M14 0v12M6 6h16M9 2l10 9M19 2L9 11" stroke="#ee0"/><path d="M12 4h4v4h-4z" fill="#0cc" stroke="red"/><path d="M22 14l9 10" stroke-width="3"/></svg><svg class="ic"><path d="M14 9h12l4 4v11l-4 4H14l-4-4V14z"/><text class="num" x="15" y="26">3</text><path d="M5 14Q-2 3 12 1q14-1 19 6M6 12l9 2" fill="none" stroke="#000090" stroke-width="2.500"/><path d="M9 8l8 5-8 5z" fill="#000090" stroke="none"/></svg><b class="w71 off">Renumber...</b><svg class="ic"><use href="#nodes"/></svg><b class="w52 off">Cleanup</b><svg class="ic"><use href="#boxes"/></svg>
</div><i class="ov"><svg><use href="#ovf"/></svg></i>
</div>
<div class="row">
<div class="tb"><i class="grip"></i>
<b class="w63 on">Auto Draw</b><svg class="ic"><use href="#prot"/></svg><svg class="ic"><use href="#ruler"/></svg><svg class="ic"><use href="#cell"/></svg><b class="w118">3 Point Coverage Cell</b><svg class="ic on hot"><use href="#pipered" y="6"/></svg><svg class="ic"><use href="#goldt"/></svg><svg class="ic"><use href="#screw"/></svg><svg class="ic"><use href="#cap"/></svg><svg class="ic"><use href="#ring"/></svg><svg class="ic"><use href="#cross"/></svg><svg class="ic"><use href="#elbow"/></svg><svg class="ic"><use href="#flange"/></svg><svg class="ic"><use href="#hose"/></svg><b class="w98">Mechanical Cross</b><b class="w87">Mechanical Tee</b><svg class="ic"><use href="#reduc"/></svg><b class="w45">Saddle</b><b class="w69">Seismic Flex</b><svg class="ic"><use href="#tee"/></svg><svg class="ic"><use href="#coupl"/></svg><svg class="ic"><use href="#valve"/></svg><svg class="ic"><use href="#nip"/></svg><svg class="ic"><use href="#pump"/></svg><svg class="ic"><use href="#wheel"/></svg><svg class="ic"><use href="#head1"/></svg><svg class="ic"><use href="#head2"/></svg><svg class="ic"><use href="#head3"/></svg><svg class="ic"><use href="#cab"/></svg><svg class="ic"><use href="#sphere"/></svg><svg class="ic"><use href="#star"/></svg><svg class="ic"><path d="M11 15L5 9M2 13V8h6" fill="none"/><circle cx="20" cy="15" r="9"/><text class="one" x="16" y="20">1</text></svg><svg class="ic"><text class="abc" x="1" y="13" textLength="29">ABC</text><text class="abc" x="1" y="28" textLength="29">ABC</text></svg><svg class="ic"><text class="biga" x="4" y="26">A</text></svg><svg class="ic"><use href="#cloud"/></svg><svg class="ic"><use href="#part"/></svg><b class="w79">Parts Profile...</b>
</div><i class="ov"><svg><use href="#ovf"/></svg></i>
</div>
<div class="row">
<div class="tb"><i class="grip"></i>
<b class="w83 off">Create Detail...</b><svg class="ic"><use href="#det1"/></svg><svg class="ic"><use href="#det2"/></svg><b class="w66 off">Hide Layers</b><b class="w78 off">Isolate Layers</b><b class="w131 off">Interference Checking...</b>
</div><i class="ov"><svg><use href="#ovf"/></svg></i>
<div class="tb"><i class="grip"></i>
<b class="w131">Hydraulic Calculations...</b><svg class="ic"><use href="#chart"/></svg><svg class="ic"><use href="#book"/></svg><svg class="ic"><use href="#table"/></svg><svg class="ic"><use href="#print"/></svg><svg class="ic"><use href="#scroll"/></svg><b class="w35">Print</b><svg class="ic"><use href="#sheet"/></svg>
</div><i class="ov"><svg><use href="#ovf"/></svg></i>
<div class="tb"><i class="grip"></i>
<svg class="ic"><use href="#elev"/></svg><b class="w89 off">Elevate to Pipes</b><b class="w89">Elevate Beams...</b><svg class="ic"><use href="#hang1"/></svg><svg class="ic"><use href="#hang2"/></svg><svg class="ic"><use href="#hang3"/></svg><b class="w74">Import DWG</b>
</div><i class="ov"><svg><use href="#ovf"/></svg></i>
<div class="tb tall"><i class="grip"></i>
<div class="big w57 on"><svg class="ic"><use href="#shaded"/></svg><b>Shaded</b></div><div class="big w76"><svg class="ic"><use href="#wire"/></svg><b>Wire Frame</b></div><div class="big w43"><b>GLSL</b></div><div class="big w69 on"><b>OpenGL®</b></div>
</div><i class="ov tall"><svg><use href="#ovf"/></svg></i>
<div class="tb"><i class="grip"></i>
<svg class="ic"><use href="#arm"/></svg>
</div><i class="ov"><svg><use href="#ovf"/></svg></i>
</div>
</section>

<main class="work">
<div class="left">
<div class="panes">
<section class="pane layers">
<h2>Layers<span><svg><use href="#pin"/></svg><svg><use href="#x"/></svg></span></h2>
<div class="inner">
<div class="ptb"><svg class="ic"><use href="#nbnew"/></svg><svg class="ic"><use href="#nbdel"/></svg><i class="sep"></i><svg class="ic"><use href="#nbdele"/></svg><svg class="ic"><use href="#prop"/></svg><i class="sep"></i><svg class="ic"><use href="#chktree"/></svg><svg class="ic"><use href="#boxtree"/></svg><i class="sep"></i><svg class="ic"><use href="#foldeye"/></svg><svg class="ic"><use href="#foldtree"/></svg><svg class="ic"><use href="#treeonly"/></svg></div>
<div class="th lay"><span>Name</span><span class="c">V.</span><span class="c">S.</span><span class="c">A.</span><span class="c">C.</span><span>Elements</span></div>
<div class="rows">
<svg class="treelines" viewBox="3 284 100 119"><path d="M9 292.500h9M10.500 318v76h8M18 309.500h-3M25.500 318v43M25.500 326.500h8M25.500 343.500h8M25.500 360.500h8M10.500 301v3" fill="none" stroke="#888" stroke-dasharray="1 1"/><path d="M6.500 305.500h8v8h-8z" fill="#fff" stroke="#888"/><path d="M8.500 309.500h4" stroke="#000"/></svg>
<div class="lr"><span class="n">BENCHMARK</span><svg class="ic e"><use href="#eye"/></svg><svg class="ic m"><use href="#mag"/></svg><i class="sw"></i><span>1</span></div>
<div class="lr"><span class="n">SPRINKLER S...</span><svg class="ic e"><use href="#eye"/></svg><svg class="ic m"><use href="#mag"/></svg><i class="sw red"></i><span>0</span></div>
<div class="lr"><span class="n in">NOZZLES</span><svg class="ic e"><use href="#eye"/></svg><svg class="ic m"><use href="#mag"/></svg><i class="sw blue"></i><span>0</span></div>
<div class="lr sel"><span class="n in">SPRINKLERS</span><svg class="ic e"><use href="#eye"/></svg><svg class="ic m"><use href="#mag"/></svg><i class="sw"></i><span>1</span></div>
<div class="lr"><span class="n in">DETAILS</span><svg class="ic e"><use href="#eye"/></svg><svg class="ic m"><use href="#mag"/></svg><i class="sw"></i><span>1</span></div>
<div class="lr"><span class="n in">SYMBOLS</span><svg class="ic e"><use href="#eye"/></svg><svg class="ic m"><use href="#mag"/></svg><i class="sw"></i><span>1</span></div>
<div class="lr"><span class="n">0</span><svg class="ic e"><use href="#eye"/></svg><svg class="ic m"><use href="#mag"/></svg><i class="sw"></i><span>0</span></div>
</div>
</div>
<div class="ptabs"><span class="w39">Textu...</span><span class="w41 act">Layers</span><span class="w49 pl">Details</span><span class="w43">Alerts</span><span class="w44">Design</span><span class="w42">News</span><span class="w44">Traini...</span><span class="w44">Fab ...</span><span>Parts ...</span></div>
</section>
<i class="split"></i>
<section class="pane select">
<h2>Select<span><svg><use href="#pin"/></svg><svg><use href="#x"/></svg></span></h2>
<div class="ptb"><svg class="ic"><use href="#bulb"/></svg><svg class="ic"><use href="#bulb2"/></svg><svg class="ic on"><use href="#fung"/></svg><svg class="ic"><use href="#funy"/></svg><svg class="ic"><use href="#refresh"/></svg><svg class="ic"><use href="#selbox"/></svg></div>
<div class="th sl"><span>Element</span><span class="r">Count</span></div>
<div class="slr"><i class="dots"></i><span>1.0, NEW</span><em>1</em></div>
</section>
<i class="split"></i>
<section class="pane symbols">
<h2>Symbols<span><svg><use href="#pin"/></svg><svg><use href="#x"/></svg></span></h2>
<div class="th sy"><span>Name</span><span>Count</span><span>Eleme...</span></div>
<div class="syr"><svg class="ic"><use href="#sym"/></svg><span>Default Sym...</span><span>0</span><span>2</span></div>
<div class="syr"><svg class="ic"><use href="#sym"/></svg><span>Long-Eared ...</span><span>0</span><span>6</span></div>
<div class="syr"><svg class="ic"><use href="#sym"/></svg><span>NEW</span><span>1</span><span>3</span></div>
<svg class="preview" viewBox="790 867 70 100"><path d="M823 877h32v87h-32z" fill="none" stroke="#000" stroke-width="6" stroke-linejoin="round"/><path d="M796 908l34 8v12l-34 6z" fill="none" stroke="#000" stroke-width="5" stroke-linejoin="round"/><path d="M818 915h14v12h-14zM831 917h24v7h-24z"/></svg>
</section>
<section class="doc">
<div class="dtabs"><span class="w66">Start Page</span><span class="w63">Drawing1</span><span class="w63">Drawing2</span><span class="w60">Drawing3</span><span class="act">Drawing4<svg><use href="#x"/></svg></span><svg class="nav" viewBox="0 0 26 10"><path d="M6 1v8L2 5zM20 1v8l4-4z" fill="none" stroke="#777"/></svg></div>
<div class="frame">
<div class="canvas">
<svg viewBox="987 224 814 702">
<defs><path id="seg20" d="M69 0L65.600 21.300 55.800 40.600 40.600 55.800 21.300 65.600 0 69-21.300 65.600-40.600 55.800-55.800 40.600-65.600 21.300-69 0-65.600-21.300-55.800-40.600-40.600-55.800-21.300-65.600 0-69 21.300-65.600 40.600-55.800 55.800-40.600 65.600-21.300z"/></defs>
<g fill="none" stroke="#000">
<use href="#seg20" x="1088" y="559" stroke-width="9"/><circle cx="1088" cy="559" r="71" stroke="#fff" stroke-width="6" stroke-dasharray="1 21.305" stroke-dashoffset=".5"/>
<path d="M1083 554l10 10M1093 554l-10 10M1084 555h8v8h-8z" stroke-width="1"/>
<path d="M1375 505h302M1671.500 499v151M1380 644h297M1380.500 499v145M1431.500 505v139" stroke-width="11.500"/>
<path d="M1390 574.500h40" stroke-width="9"/>
<use href="#seg20" x="1601.500" y="574.500" stroke-width="10"/><circle cx="1601.500" cy="574.500" r="71" stroke="#fff" stroke-width="5" stroke-dasharray="1 21.305" stroke-dashoffset=".5"/>
</g>
<path d="M1337 555.500l38 8.500v1h18v19h-18v1l-38 9z"/>
<path d="M1592.500 574v-60h-10l19.500-40 20 40h-10v50" fill="none" stroke="#2c842c"/>
<path d="M1612 564.500h50v-10l40 20-40 20v-10h-60" fill="none" stroke="#842c2c"/>
<circle cx="1602" cy="574.500" r="10" fill="#fff" stroke="#888"/>
<path d="M1602 564.500v10h-10a10 10 0 0 1 10-10zM1602 584.500v-10h10a10 10 0 0 1-10 10z"/>
<path d="M1582 574.500h40" stroke="#1c1c80"/>
</svg>
<i class="vth"></i><i class="hth"></i>
</div>
<div class="sheets"><svg viewBox="0 0 340 18" width="340" height="18"><g fill="#f0f0f0"><path d="M1 3h13v13H1zM17 3h13v13H17zM33 3h13v13H33zM49 3h13v13H49z"/></g><path d="M4 5v9M10 5v9L6 9.500zM26 5v9l-5-4.500zM37 5v9l5-4.500zM52 5v9l5-4.500zM59 5v9" fill="#555" stroke="#555"/><path d="M118 17L136 1h50l-16 16z" fill="#c5cad6" stroke="#eee"/><path d="M68 0h60l-10 17H72z" fill="#fafafa"/><g class="stx"><text x="75" y="14" font-weight="bold" textLength="39">*Model</text><text x="127" y="14" textLength="42">*Sheet 1</text></g></svg></div>
</div>
</section>
</div>
<footer class="status"><span>Locate the first end of the pipe.</span><span class="w57 s">0 selected</span><span class="w6 s"></span><span class="w6 s"></span><span class="w6 s"></span><span class="w64 s">ø 2 (2.0670)</span><span class="w33 s"># Off</span><span class="w30 s">Foot</span></footer>
</div>
<aside class="strip a"><div class="body"><i class="hgrip"></i>
<svg class="ic"><use href="#s1"/></svg>
<svg class="ic dim"><use href="#fr"/><path d="M9 5h9v13H9z" fill="#999" stroke="none"/><path d="M4 5h5M4 9h5M4 13h5M18 6v12"/></svg><i class="hs"></i>
<svg class="ic"><use href="#fr"/><path d="M4 10q3-6 8 0t7 0q-3-6-7 0t-8 0" fill="none" stroke="#00f"/></svg>
<svg class="ic dim"><use href="#fr"/><path d="M6 9h6v5H6zM14 5h5v5h-5z" fill="#666" stroke="none"/></svg><i class="hs"></i>
<svg class="ic"><use href="#fr"/><path d="M6 5l6 3 6-3 2 3v8l-3 2-5-3-4 3-3-2V8z" fill="#c81020" stroke="none"/></svg>
<svg class="ic"><use href="#fr"/><path d="M7 4h6l5 8v6h-5L7 9z" fill="#e81824" stroke="none"/><path d="M11 12h5v3" stroke="#400" fill="none"/></svg><i class="hs"></i>
<svg class="ic"><use href="#fr"/><path d="M12.500 4v12M7 10h11M8 5l9 9M17 5l-9 9" stroke="#e81824"/></svg>
<svg class="ic"><use href="#fr"/><path d="M8 5h9M12.500 5v10M4 17l4-2h9l3 2" stroke="#e81824" fill="none"/></svg>
<svg class="ic"><use href="#fr"/><path d="M4 7l4-2h9l3 2M12.500 5v12" stroke="#e81824" fill="none"/><path d="M9 18h8" stroke="#888"/></svg><i class="hs"></i>
<svg class="ic"><use href="#fr"/><path d="M7 6l9 8" stroke="#e81824" stroke-width="5"/><path d="M8 6l7 7" stroke="#fff" stroke-width="1"/><path d="M14 12h4v4h-4z" fill="#000" stroke="none"/></svg>
<svg class="ic"><use href="#fr"/><path d="M4 8h16" stroke="#e81824" stroke-width="4"/><path d="M12.500 10v6M9 15h7"/></svg>
<svg class="ic"><use href="#fr"/><path d="M5 4v6M12 4v6M19 4v6" stroke="#e81824" /><path d="M4 9h16v7H4z" fill="#e81824" stroke="none"/></svg><i class="hs"></i>
<svg class="ic"><use href="#fr"/><path d="M6 5q3-4 7 0t6 0q-3-4-6 0t-7 0" fill="none" stroke="#00f" stroke-width="1.500"/><path d="M4 12h12M10 12v6" stroke-width="4"/></svg>
<svg class="ic"><use href="#fr"/><path d="M4 14h16" stroke="#e81824" stroke-width="4"/><path d="M9 5h8M12.500 5v12M10 11v6h6" fill="none"/></svg>
<div class="vt"><span>H Assbly</span></div>
<svg class="ic"><use href="#fr"/><path d="M4 7h16" stroke="#e81824" stroke-width="6"/><path d="M6 13h14M10 8v10"/><path d="M4 13l6-5v10z" fill="#000" stroke="none"/></svg>
</div><i class="end"><svg class="ic dd" viewBox="0 0 8 12"><path d="M1 1l3 3 3-3M1 7l3 3 3-3" stroke-width="1.200" stroke="#fff" fill="none" stroke-dasharray="2 1"/></svg><svg><use href="#ovfv"/></svg></i></aside>
<aside class="strip b"><div class="body"><i class="hgrip"></i>
<svg class="ic"><use href="#arm"/></svg><svg class="ic"><use href="#v2"/></svg><i class="hs"></i><svg class="ic"><use href="#v3"/></svg><svg class="ic"><use href="#v4"/></svg><svg class="ic"><use href="#v5"/></svg><i class="hs"></i><svg class="ic"><use href="#v6"/></svg><svg class="ic"><use href="#v7"/></svg><svg class="ic"><use href="#v8"/></svg>
</div><i class="end"><svg><use href="#ovfv"/></svg></i></aside>
</main>

<div class="row bottom">
<div class="tb"><i class="grip"></i>
<svg class="ic"><use href="#b1"/></svg><svg class="ic on"><use href="#b2"/></svg><svg class="ic on"><use href="#b3"/></svg><svg class="ic"><use href="#b4"/></svg><svg class="ic"><use href="#b5"/></svg><svg class="ic"><use href="#b6"/></svg><svg class="ic"><use href="#b7"/></svg><svg class="ic on"><use href="#b8"/></svg><svg class="ic on"><use href="#b9"/></svg><i class="sep"></i><svg class="ic"><use href="#b10"/></svg><svg class="ic on"><use href="#b11"/></svg>
</div><i class="ov"><svg><use href="#ovf"/></svg></i>
<div class="tb"><i class="grip"></i><b class="w37 on">Input</b><svg class="ic"><use href="#math"/></svg><svg class="ic"><use href="#goarr"/></svg><span class="edit"><mark>1</mark></span></div><i class="ov"><svg><use href="#ovf"/></svg></i>
<div class="tb"><i class="grip"></i>
<svg class="ic"><use href="#tgt"/></svg><svg class="ic soft"><use href="#lockt"/></svg><b class="w87">Lock On Target</b><svg class="ic"><use href="#zin"/></svg><svg class="ic"><use href="#zout"/></svg><svg class="ic"><use href="#prev"/></svg><svg class="ic"><use href="#next"/></svg><svg class="ic"><use href="#undo"/></svg><svg class="ic"><use href="#up"/></svg><svg class="ic"><use href="#down"/></svg><svg class="ic"><use href="#redo"/></svg><svg class="ic"><use href="#left"/></svg><svg class="ic"><use href="#right"/></svg><svg class="ic"><use href="#rotl"/></svg><svg class="ic"><use href="#rotr"/></svg><svg class="ic"><use href="#h1"/></svg><svg class="ic"><use href="#h2"/></svg><svg class="ic"><use href="#h3"/></svg><svg class="ic"><use href="#h4"/></svg><svg class="ic"><use href="#zwin"/></svg><svg class="ic"><use href="#zext"/></svg><svg class="ic"><use href="#iso"/></svg><svg class="ic on"><use href="#plan"/></svg>
</div><i class="ov"><svg><use href="#ovf"/></svg></i>
</div>
</body>
</html>
```
FILE: styles.css
```css
*{box-sizing:border-box}
body{margin:0;width:1920px;height:1032px;overflow:hidden;background:#505050;font:12px/1 "Open Sans","Noto Sans",sans-serif;letter-spacing:-.35px;color:#000;display:flex;flex-direction:column;white-space:nowrap}
i,em{font-style:normal}
svg{flex:none;display:block}
.defs{position:absolute}
.ic{fill:#fff;stroke:#000;stroke-width:2;shape-rendering:crispEdges}

.w6{width:6px}.w30{width:30px}.w33{width:33px}.w35{width:35px}.w37{width:37px}.w39{width:39px}.w40{width:40px}.w41{width:41px}.w42{width:42px}.w43{width:43px}.w44{width:44px}.w45{width:45px}.w46{width:46px}.w49{width:49px}.w52{width:52px}.w53{width:53px}.w56{width:56px}.w57{width:57px}.w59{width:59px}.w60{width:60px}.w63{width:63px}.w64{width:64px}.w65{width:65px}.w66{width:66px}.w68{width:68px}.w69{width:69px}.w70{width:70px}.w71{width:71px}.w72{width:72px}.w74{width:74px}.w76{width:76px}.w78{width:78px}.w79{width:79px}.w83{width:83px}.w87{width:87px}.w89{width:89px}.w91{width:91px}.w98{width:98px}.w102{width:102px}.w103{width:103px}.w104{width:104px}.w118{width:118px}.w131{width:131px}.w219{width:219px}

.title{height:23px;flex:none;display:flex;align-items:center;background:linear-gradient(90deg,#eef5ef,#eaf4f8 60%,#eef5f0);padding-left:3px}
.title .app{width:15px;height:15px;margin-right:6px}
.title .cap{flex:1;letter-spacing:-.2px}
.title .win{width:110px;height:14px;margin-right:15px}
.menu{height:23px;flex:none;display:flex;align-items:center;color:#fff;background:#505050;padding-left:2px;letter-spacing:-.33px}
.menu .ic{margin-right:11px}
.menu .mdi{width:42px;height:12px;margin-left:auto;margin-right:3px;margin-top:5px}

.bars{height:152px;flex:none}
.row{display:flex;height:46px;align-items:flex-start}
.tb{display:flex;align-items:center;height:45px;background:linear-gradient(#d0d3d8,#c9ccd1 30%,#b0b4bb 60%,#949ba5);border-radius:3px 0 0 3px;padding-right:2px}
.gapl{margin-left:-1px}
.tb .ic,.ptb .ic{width:44px;height:42px;padding:6px}
.tb .on.ic,.ptb .on.ic,.tb .soft.ic{padding:5px}
.tb>b{font-weight:400;height:41px;display:flex;align-items:center;justify-content:center}
b{font-weight:400}
.off{color:#8b8f96}
.num{font:bold 19px "Liberation Sans",sans-serif;fill:#000;stroke:none}
.one{font:bold 15px "Liberation Serif",serif;fill:#000;stroke:none}
.abc{font:14px "Liberation Sans",sans-serif;letter-spacing:0;fill:#000;stroke-width:.4px}
.biga{font:bold 33px "Liberation Serif",serif;fill:#222;stroke:none}
.stx{font:11.5px "Open Sans",sans-serif}
.grip{width:11px;height:28px;flex:none;background:linear-gradient(#444 50%,#eee 50%) 4px 0/2px 4px repeat-y}
.ov{width:19px;height:45px;flex:none;background:linear-gradient(#9197a0,#727883 50%,#4a505b);border-radius:0 3px 3px 0;display:flex;align-items:flex-end;justify-content:center;padding-bottom:2px}
.ov svg{width:11px;height:12px;fill:none}
.on{background:linear-gradient(#fbdab8,#fdc78c 32%,#ffb054 38%,#fdc468 58%,#fee893 80%,#ffe377 86%,#fff0a8);border:1px solid #d9c7a0;border-radius:2px}
.hot{background:linear-gradient(#e0a068,#fdbd7c 10% 40%,#ff9a38 45%,#ffb54c 70%,#ffdf66)}
.soft{background:#c9d2d4;border:1px solid #a9b2b8}
.tall{height:59px}
.tb.tall .grip{height:30px}
.tb.tall .big .ic{width:32px;height:30px;padding:0}
.big{height:56px;display:flex;flex-direction:column;align-items:center;justify-content:flex-end;padding-bottom:6px;gap:4px}
.tb.tall .big b{height:13px}
.sep{width:2px;height:26px;margin:0 3px;flex:none;background:linear-gradient(90deg,#777c85 50%,#fff 50%)}

.work{display:flex;height:788px;flex:none}
.left{width:1824px;display:flex;flex-direction:column}
.panes{display:flex;height:769px}
.pane{background:#fff;border-top:1px solid #e8e8e8;position:relative}
.pane h2{margin:0;height:19px;background:#9c9e9c;font:inherit;color:#333;display:flex;align-items:center;justify-content:space-between;padding:0 5px 0 4px}
.pane h2 span{display:flex;gap:7px}
.pane h2 svg{width:9px;height:9px}
.layers{width:400px;background:#505050}
.inner{height:727px;background:#fff;border:3px solid #dcdee0;border-right-width:2px;margin-right:1px;overflow:hidden}
.ptb{height:44px;display:flex;align-items:center;padding-left:2px;overflow:hidden;background:linear-gradient(#d0d3d8,#c4c7cc 40%,#949ba5)}
.inner .ptb{height:43px}
.th{display:flex;height:19px;background:linear-gradient(#f8f8f8,#e2e2e2);border-bottom:1px solid #bbb;letter-spacing:-.1px}
.inner .th{height:20px}
.th span{display:flex;align-items:center;border-right:1px solid #c0c0c0;padding:2px 0 0 5px}
.th .c{padding:2px 0 0;justify-content:center;width:20px}
.lay span:first-child{width:100px}.lay span:last-child{width:75px;letter-spacing:-.25px}
.rows{position:relative}
.treelines{position:absolute;left:0;top:0;width:100px;height:119px}
.lr{display:flex;height:17px;align-items:center;width:255px}
.lr .n{width:100px;padding-left:17px;letter-spacing:-.4px}
.lr .n.in{padding-left:32px}
.lr .e{width:16px;height:12px}
.lr .m{width:14px;height:14px;margin-left:5px}
.sw{width:18px;height:13px;background:#000;border:1px solid #999;margin:0 5px 0 25px}
.red{background:red}.blue{background:#00f}
.sel{color:#fff;background:linear-gradient(90deg,transparent 30px,#0078d7 30px)}
.ptabs{display:flex;height:22px;color:#fff;padding-left:8px;align-items:flex-start;letter-spacing:-.45px}
.ptabs span{padding-top:5px;height:20px}
.ptabs .pl{padding-left:8px;width:52px}
.ptabs .act{background:linear-gradient(#fff,#d4d8e2);color:#000;border-radius:0 0 4px 4px;padding-left:4px;margin:-2px 0 0 -1px;padding-top:7px;width:42px;height:21px}
.split{width:4px;background:linear-gradient(#b4b8be,#9aa0aa) 0 0/4px 245px no-repeat}
.select{width:293px}
.sl span:first-child{width:200px}.sl .r{width:50px;justify-content:flex-end;padding-right:4px}
.slr{display:flex;align-items:center;height:16px;padding-left:5px}
.dots{width:9px;border-top:1px dotted #888;margin-right:3px}
.slr span{width:225px}
.symbols{width:275px;margin-right:5px}
.sy{height:19px}
.sy span:nth-child(1){width:100px}.sy span:nth-child(2),.sy span:nth-child(3){width:50px}
.syr{display:flex;align-items:center;height:17px;padding-left:2px}
.syr .ic{width:16px;height:15px;margin-right:2px}
.syr span:nth-of-type(1){width:86px}.syr span:nth-of-type(2){width:50px}
.preview{position:absolute;left:89px;bottom:0;width:70px;height:100px}
.doc{flex:1;border-top:1px solid #a8a8a8;margin-top:1px}
.dtabs{display:flex;height:18px;align-items:flex-start;color:#fff;padding-left:7px}
.dtabs span{padding-top:3px}
.dtabs .act{background:linear-gradient(#fff,#ccd0d8);color:#000;font-weight:700;width:78px;height:17px;margin:1px 0 0 -2px;border-radius:4px 4px 0 0;padding-left:4px;display:flex;justify-content:space-between;letter-spacing:-.8px}
.dtabs .act svg{width:9px;height:9px;margin:2px 5px 0 0}
.dtabs .nav{width:26px;height:10px;margin:4px 6px 0 auto}
.frame{height:748px;background:#777;border:3px solid #e6e6e6;border-right-width:6px;border-bottom-width:6px;padding:2px 0 0 2px}
.canvas{height:718px;background:#f0f0f0;border:1px solid #666;border-width:1px 0 0 1px;position:relative}
.canvas svg{background:#fff;width:814px;height:702px}
.vth{position:absolute;left:821px;top:344px;width:2px;height:17px;background:#888}
.hth{position:absolute;left:53px;top:709px;width:17px;height:2px;background:#888}
.sheets{height:19px;background:linear-gradient(#444,#707070 30%,#787878)}
.status{height:19px;display:flex;align-items:center;color:#fff;background:linear-gradient(#40434e,#3b3e48 40%,#2e2e2d 42%)}
.status span{padding:2px 0 0 4px;height:17px;display:flex;align-items:center}
.status span:first-child{flex:1}
.status .s{border-left:1px solid #777}

.strip{display:flex;flex-direction:column;width:47px}
.strip .body{background:linear-gradient(90deg,#d0d3d8,#c4c8ce 35%,#949ba6);display:flex;flex-direction:column;align-items:center;border-left:1px solid #8c939e;border-radius:0 0 3px 3px}
.strip .body .ic{width:34px;height:42px;padding:6px 1px}
.strip.b{margin-left:1px;width:48px}
.strip.b .body{padding-right:2px}
.a .body{height:767px}.b .body{height:363px}
.hgrip{width:31px;height:2px;margin:4px 0;flex:none;background:repeating-linear-gradient(90deg,#333 0 2px,#eee 2px 4px)}
.hs{width:28px;height:2px;margin:3px 0;flex:none;background:linear-gradient(#666 50%,#fff 50%)}
.dim{opacity:.75}
.vt{height:57px;display:flex;align-items:center;writing-mode:vertical-rl;letter-spacing:0}
.vt span{margin:auto;padding-top:2px}
.end{height:21px;display:flex;justify-content:flex-end;align-items:center;gap:14px;padding-right:4px;background:linear-gradient(90deg,#565c68,#8f95a0)}
.end svg{width:13px;height:12px;fill:none}
.end .dd{width:8px}

.bottom{flex:none}
.bottom .grip{width:10px}
.bottom .tb{padding-right:3px}
.edit{width:62px;height:15px;background:#fff;margin:0 1px 0 3px;padding:1px}
.edit mark{background:#0078d7;color:#fff;display:block;width:6px;height:13px}
```
